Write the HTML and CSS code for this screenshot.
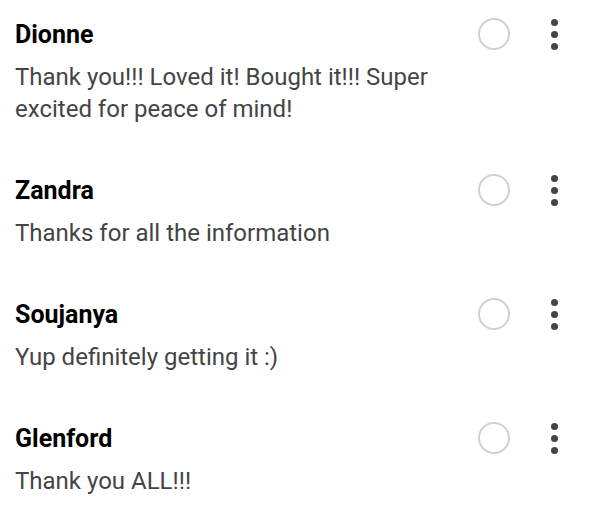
FILE: index.html
```html
<!DOCTYPE html>
<html>
<head>
<meta charset="utf-8">
<link rel="stylesheet" href="styles.css">
</head>
<body>
<ul class="comments">
  <li class="comment">
    <div class="body">
      <div class="name">Dionne</div>
      <p class="msg">Thank you!!! Loved it! Bought it!!! Super excited for peace of mind!</p>
    </div>
    <div class="actions">
      <span class="radio"></span>
      <span class="more"><i></i><i></i><i></i></span>
    </div>
  </li>
  <li class="comment">
    <div class="body">
      <div class="name">Zandra</div>
      <p class="msg">Thanks for all the information</p>
    </div>
    <div class="actions">
      <span class="radio"></span>
      <span class="more"><i></i><i></i><i></i></span>
    </div>
  </li>
  <li class="comment">
    <div class="body">
      <div class="name">Soujanya</div>
      <p class="msg">Yup definitely getting it :)</p>
    </div>
    <div class="actions">
      <span class="radio"></span>
      <span class="more"><i></i><i></i><i></i></span>
    </div>
  </li>
  <li class="comment">
    <div class="body">
      <div class="name">Glenford</div>
      <p class="msg">Thank you ALL!!!</p>
    </div>
    <div class="actions">
      <span class="radio"></span>
      <span class="more"><i></i><i></i><i></i></span>
    </div>
  </li>
</ul>
</body>
</html>
```
FILE: styles.css
```css
html, body {
  margin: 0;
  padding: 0;
  background: #fff;
}
body {
  font-family: Roboto, "Liberation Sans", sans-serif;
}
.comments {
  list-style: none;
  margin: 0;
  padding: 0;
}
.comment {
  display: flex;
  align-items: flex-start;
  padding: 21px 34px 31px 15px;
}
.body {
  flex: 1;
  min-width: 0;
}
.name {
  font-size: 25px;
  font-weight: 700;
  line-height: 28px;
  color: #000;
}
.msg {
  margin: 12px 0 0;
  font-size: 24px;
  line-height: 32px;
  color: #444;
}
.actions {
  display: flex;
  align-items: center;
  gap: 41px;
  height: 26px;
  padding-left: 10px;
}
.radio {
  width: 32px;
  height: 32px;
  box-sizing: border-box;
  border: 2px solid #cfcfcf;
  border-radius: 50%;
}
.more {
  display: flex;
  flex-direction: column;
  gap: 5px;
  width: 7px;
}
.more i {
  display: block;
  width: 7px;
  height: 7px;
  border-radius: 50%;
  background: #444;
}
```
